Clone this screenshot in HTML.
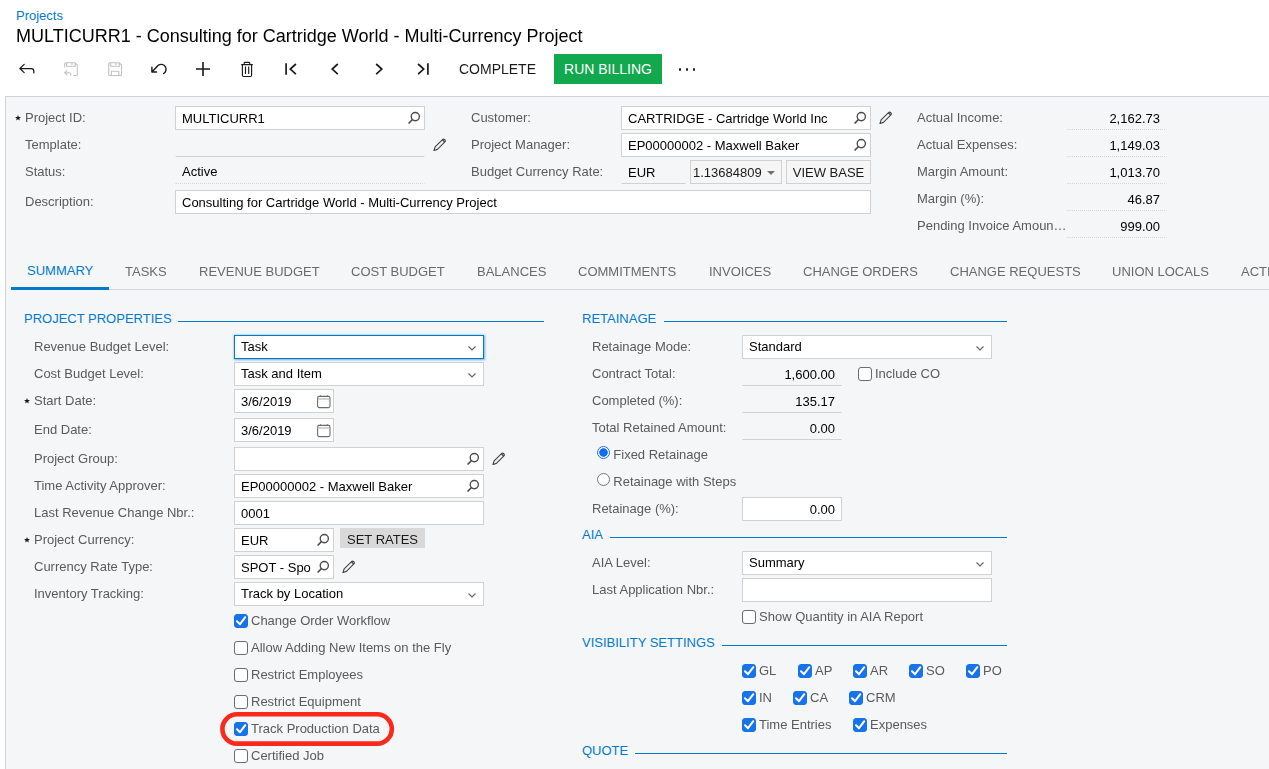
<!DOCTYPE html>
<html><head><meta charset="utf-8"><title>Projects</title>
<style>
html,body{margin:0;padding:0;background:#fff;}
body{width:1269px;height:769px;overflow:hidden;position:relative;font-family:"Liberation Sans",sans-serif;font-size:13px;}
#wrap{position:absolute;left:0;top:0;width:1269px;height:769px;overflow:hidden;}
.lbl,.box:not(.focus),.btn2,.g,.req{filter:grayscale(1)}
.abs,.lbl,.box,.req,.cb,.rb,.sec,.btn2{position:absolute;box-sizing:border-box;white-space:nowrap;}
.lbl{font-size:13px;line-height:24px;}
.req{font-size:12px;line-height:29px;color:#222;font-weight:bold}
.box{background:#fff;border:1px solid #cfd1d4;font-size:13px;line-height:24px;color:#000;padding:0 6px;overflow:hidden}
.box.ro{background:transparent;border-color:transparent;border-bottom:1px solid #cfd1d4}
.box.dot{background:transparent;border-color:transparent;border-bottom:1px dotted #d3d5d8}
.box.focus{border:1px solid #027acc;box-shadow:0 0 2px 0.5px rgba(2,122,204,.55);overflow:visible}
.box.dd{line-height:22px}
.ic{position:absolute}
.sec{font-size:13px;line-height:24px;color:#027acc}
.tab{font-size:13px;line-height:20px}
.cb{width:14px;height:14px;border:1px solid #6b6b6b;border-radius:3px;background:#fff}
.cb.on{background:#1773ea;border-color:#1773ea}
.cb svg{position:absolute;left:-1px;top:-1px}
.rb{width:13px;height:13px;border:1px solid #767676;border-radius:50%;background:#fff}
.rb.on{border:1px solid #1773ea;background:radial-gradient(circle,#0f6cf5 0,#0f6cf5 3.9px,#fff 4.6px)}
.btn2{border:1px solid #cfd1d4;background:#f5f6f8;font-size:13px;line-height:23px;color:#1a1a1a;text-align:center}
.caret{display:inline-block;width:0;height:0;border-left:4px solid transparent;border-right:4px solid transparent;border-top:4px solid #707070;margin-left:5px;vertical-align:2px}
</style></head>
<body>
<div class="abs" style="left:16px;top:8px;font-size:13px;line-height:16px;color:#027acc">Projects</div>
<div class="abs g" id="title" style="left:16px;top:24px;font-size:18px;line-height:24px;color:#000;white-space:nowrap">MULTICURR1 - Consulting for Cartridge World - Multi-Currency Project</div>
<svg class="abs" style="left:18px;top:62px" width="18" height="14" viewBox="0 0 18 14"><path d="M6.2 2.4 L1.9 6.5 L6.2 10.6 M1.9 6.5 H13.2 Q15.8 6.5 15.8 9.1 V10.9" stroke="#1a1a1a" stroke-width="1.25" fill="none" stroke-linecap="round" stroke-linejoin="round"/></svg>
<svg class="abs" style="left:63px;top:61px" width="17" height="16" viewBox="0 0 17 16"><path d="M1.7 6.6 V2.7 Q1.7 1.7 2.7 1.7 H12 L14.3 4 V13.5 Q14.3 14.5 13.3 14.5 H10.3 M3.6 1.7 V5.3 H12.2 V1.7 M9 2.3 V4" stroke="#c2c2c2" stroke-width="1.1" fill="none"/><path d="M4.3 9.3 L1.6 11.7 L4.3 14.1 M1.6 11.7 H6 Q7.8 11.7 7.8 13.3 V14.6" stroke="#c2c2c2" stroke-width="1.1" fill="none"/></svg>
<svg class="abs" style="left:107px;top:61px" width="16" height="16" viewBox="0 0 16 16"><path d="M1.7 2.7 Q1.7 1.7 2.7 1.7 H12.2 L14.5 4 V13.5 Q14.5 14.5 13.5 14.5 H2.7 Q1.7 14.5 1.7 13.5 Z M3.6 1.7 V5.3 H12.2 V1.7 M9 2.3 V4 M4.4 14.5 V10.3 H11.8 V14.5" stroke="#c2c2c2" stroke-width="1.1" fill="none"/></svg>
<svg class="abs" style="left:150px;top:61px" width="18" height="16" viewBox="0 0 18 16"><path d="M1.9 6.2 V11 H6.6 M1.9 11 L8 4.5 A4.9 4.9 0 1 1 13.6 12.5" stroke="#1a1a1a" stroke-width="1.4" fill="none" stroke-linejoin="round" stroke-linecap="round"/></svg>
<svg class="abs" style="left:195px;top:61px" width="16" height="16" viewBox="0 0 16 16"><path d="M8 1 V15 M1 8 H15" stroke="#1a1a1a" stroke-width="1.6" fill="none"/></svg>
<svg class="abs" style="left:240px;top:60px" width="14" height="18" viewBox="0 0 14 18"><path d="M1.2 4.6 H12.8 M4.2 4.4 V3.2 Q4.2 2.3 5.1 2.3 H8.9 Q9.8 2.3 9.8 3.2 V4.4 M2.4 4.6 V15.3 Q2.4 16.5 3.6 16.5 H10.4 Q11.6 16.5 11.6 15.3 V4.6 M5.5 6.6 V14 M8.7 6.6 V14" stroke="#1a1a1a" stroke-width="1.15" fill="none"/></svg>
<svg class="abs" style="left:283px;top:61px" width="16" height="16" viewBox="0 0 16 16"><path d="M3.1 2.2 V13.8 M12.9 3 L7.3 8.1 L12.9 13.2" stroke="#1a1a1a" stroke-width="1.7" fill="none"/></svg>
<svg class="abs" style="left:329px;top:61px" width="12" height="16" viewBox="0 0 12 16"><path d="M8.8 3 L3.2 8.1 L8.8 13.2" stroke="#1a1a1a" stroke-width="1.7" fill="none"/></svg>
<svg class="abs" style="left:373px;top:61px" width="12" height="16" viewBox="0 0 12 16"><path d="M3.2 3 L8.8 8.1 L3.2 13.2" stroke="#1a1a1a" stroke-width="1.7" fill="none"/></svg>
<svg class="abs" style="left:415px;top:61px" width="16" height="16" viewBox="0 0 16 16"><path d="M12.9 2.2 V13.8 M3.1 3 L8.7 8.1 L3.1 13.2" stroke="#1a1a1a" stroke-width="1.7" fill="none"/></svg>
<div class="abs g" style="left:459px;top:59px;font-size:14px;line-height:20px;color:#1a1a1a">COMPLETE</div>
<div class="abs" style="left:554px;top:54px;width:108px;height:30px;background:#12a84d;color:#fff;font-size:14px;line-height:30px;text-align:center">RUN BILLING</div>
<div class="abs" style="left:679px;top:68.2px;width:2.4px;height:2.4px;border-radius:2px;background:#222;box-shadow:7px 0 0 #222,14px 0 0 #222"></div>
<div class="abs" style="left:5px;top:96px;width:1270px;height:700px;background:#f5f6f8;border:1px solid #d2d4d8;box-sizing:border-box"></div>
<div class="lbl" style="left:25px;top:106px;color:#5a5a5a">Project ID:</div>
<svg class="abs" style="left:13.9px;top:113.9px" width="8" height="8" viewBox="0 0 8 8"><polygon points="4.00,0.90 4.79,2.91 6.95,3.04 5.28,4.42 5.82,6.51 4.00,5.35 2.18,6.51 2.72,4.42 1.05,3.04 3.21,2.91" fill="#1a1a1a"/></svg>
<div class="lbl" style="left:25px;top:133px;color:#5a5a5a">Template:</div>
<div class="lbl" style="left:25px;top:160px;color:#5a5a5a">Status:</div>
<div class="lbl" style="left:25px;top:190px;color:#5a5a5a">Description:</div>
<div class="box" style="left:175px;top:106px;width:250px;height:24px;">MULTICURR1<svg class="ic" style="right:3px;top:3.5px" width="14" height="14" viewBox="0 0 14 14"><circle cx="8.3" cy="5.6" r="4.1" fill="none" stroke="#4a4a4a" stroke-width="1.35"/><path d="M5.5 8.5 L1.6 12.5" stroke="#4a4a4a" stroke-width="1.7" fill="none"/></svg></div>
<div class="box ro" style="left:175px;top:133px;width:250px;height:24px;"></div>
<svg class="abs" style="left:432.5px;top:137.5px" width="13.5" height="13.5" viewBox="0 0 14 14"><path d="M1 13 L2.2 9.3 L9.9 1.6 Q11 0.7 12.2 1.8 Q13.3 3 12.3 4.1 L4.6 11.8 Z" fill="none" stroke="#444" stroke-width="1.15" stroke-linejoin="round"/><path d="M9.7 1.8 L12.1 4.2" stroke="#444" stroke-width="1.3"/></svg>
<div class="box dot" style="left:175px;top:160px;width:250px;height:24px;"><span style="position:relative;top:-1.5px">Active</span></div>
<div class="box" style="left:175px;top:190px;width:696px;height:24px;">Consulting for Cartridge World - Multi-Currency Project</div>
<div class="lbl" style="left:471px;top:106px;color:#5a5a5a">Customer:</div>
<div class="lbl" style="left:471px;top:133px;color:#5a5a5a">Project Manager:</div>
<div class="lbl" style="left:471px;top:160px;color:#5a5a5a">Budget Currency Rate:</div>
<div class="box" style="left:621px;top:106px;width:250px;height:24px;">CARTRIDGE - Cartridge World Inc<svg class="ic" style="right:3px;top:3.5px" width="14" height="14" viewBox="0 0 14 14"><circle cx="8.3" cy="5.6" r="4.1" fill="none" stroke="#4a4a4a" stroke-width="1.35"/><path d="M5.5 8.5 L1.6 12.5" stroke="#4a4a4a" stroke-width="1.7" fill="none"/></svg></div>
<svg class="abs" style="left:878.5px;top:110.5px" width="13.5" height="13.5" viewBox="0 0 14 14"><path d="M1 13 L2.2 9.3 L9.9 1.6 Q11 0.7 12.2 1.8 Q13.3 3 12.3 4.1 L4.6 11.8 Z" fill="none" stroke="#444" stroke-width="1.15" stroke-linejoin="round"/><path d="M9.7 1.8 L12.1 4.2" stroke="#444" stroke-width="1.3"/></svg>
<div class="box" style="left:621px;top:133px;width:250px;height:24px;">EP00000002 - Maxwell Baker<svg class="ic" style="right:3px;top:3.5px" width="14" height="14" viewBox="0 0 14 14"><circle cx="8.3" cy="5.6" r="4.1" fill="none" stroke="#4a4a4a" stroke-width="1.35"/><path d="M5.5 8.5 L1.6 12.5" stroke="#4a4a4a" stroke-width="1.7" fill="none"/></svg></div>
<div class="box ro" style="left:621px;top:160px;width:65px;height:24px;">EUR</div>
<div class="btn2" style="left:690px;top:160px;width:92px;height:24px;text-align:left;padding-left:2px">1.13684809<span class="caret"></span></div>
<div class="btn2" style="left:786px;top:160px;width:85px;height:24px">VIEW BASE</div>
<div class="lbl" style="left:917px;top:106px;color:#5a5a5a">Actual Income:</div>
<div class="box dot" style="left:1067px;top:106px;width:100px;height:24px;text-align:right;padding-right:6px;">2,162.73</div>
<div class="lbl" style="left:917px;top:133px;color:#5a5a5a">Actual Expenses:</div>
<div class="box dot" style="left:1067px;top:133px;width:100px;height:24px;text-align:right;padding-right:6px;">1,149.03</div>
<div class="lbl" style="left:917px;top:160px;color:#5a5a5a">Margin Amount:</div>
<div class="box dot" style="left:1067px;top:160px;width:100px;height:24px;text-align:right;padding-right:6px;">1,013.70</div>
<div class="lbl" style="left:917px;top:187px;color:#5a5a5a">Margin (%):</div>
<div class="box dot" style="left:1067px;top:187px;width:100px;height:24px;text-align:right;padding-right:6px;">46.87</div>
<div class="lbl" style="left:917px;top:214px;color:#5a5a5a">Pending Invoice Amoun…</div>
<div class="box dot" style="left:1067px;top:214px;width:100px;height:24px;text-align:right;padding-right:6px;">999.00</div>
<div class="abs tab" style="left:27px;top:261px;color:#027acc">SUMMARY</div>
<div class="abs tab g" style="left:125px;top:262px;color:#6a6a6a">TASKS</div>
<div class="abs tab g" style="left:199px;top:262px;color:#6a6a6a">REVENUE BUDGET</div>
<div class="abs tab g" style="left:351px;top:262px;color:#6a6a6a">COST BUDGET</div>
<div class="abs tab g" style="left:477px;top:262px;color:#6a6a6a">BALANCES</div>
<div class="abs tab g" style="left:578px;top:262px;color:#6a6a6a">COMMITMENTS</div>
<div class="abs tab g" style="left:709px;top:262px;color:#6a6a6a">INVOICES</div>
<div class="abs tab g" style="left:803px;top:262px;color:#6a6a6a">CHANGE ORDERS</div>
<div class="abs tab g" style="left:950px;top:262px;color:#6a6a6a">CHANGE REQUESTS</div>
<div class="abs tab g" style="left:1112px;top:262px;color:#6a6a6a">UNION LOCALS</div>
<div class="abs tab g" style="left:1241px;top:262px;color:#6a6a6a">ACTIVITIES</div>
<div class="abs" style="left:11px;top:289px;width:1260px;height:1px;background:#d4d6d9"></div>
<div class="abs" style="left:11px;top:287px;width:98px;height:3px;background:#027acc"></div>
<div class="sec" style="left:24px;top:307px">PROJECT PROPERTIES</div>
<div class="abs" style="left:178px;top:321px;width:366px;height:1px;background:#027acc"></div>
<div class="lbl" style="left:34px;top:335px;color:#5a5a5a">Revenue Budget Level:</div>
<div class="box focus dd" style="left:234px;top:335px;width:250px;height:24px;"><span class="g" style="display:inline-block">Task</span><svg class="ic" style="right:6.5px;top:9px" width="10" height="7" viewBox="0 0 10 7"><path d="M1.5 1.5 L5 5 L8.5 1.5" stroke="#666" stroke-width="1.2" fill="none"/></svg></div>
<div class="lbl" style="left:34px;top:362px;color:#5a5a5a">Cost Budget Level:</div>
<div class="box dd" style="left:234px;top:362px;width:250px;height:24px;">Task and Item<svg class="ic" style="right:6.5px;top:9px" width="10" height="7" viewBox="0 0 10 7"><path d="M1.5 1.5 L5 5 L8.5 1.5" stroke="#666" stroke-width="1.2" fill="none"/></svg></div>
<div class="lbl" style="left:34px;top:389px;color:#5a5a5a">Start Date:</div>
<svg class="abs" style="left:22.9px;top:396.9px" width="8" height="8" viewBox="0 0 8 8"><polygon points="4.00,0.90 4.79,2.91 6.95,3.04 5.28,4.42 5.82,6.51 4.00,5.35 2.18,6.51 2.72,4.42 1.05,3.04 3.21,2.91" fill="#1a1a1a"/></svg>
<div class="box" style="left:234px;top:389px;width:100px;height:24px;">3/6/2019<svg class="ic" style="right:1.6px;top:4.8px" width="14" height="14" viewBox="0 0 14 14"><rect x="0.6" y="1.4" width="12.4" height="11.2" rx="1.6" fill="none" stroke="#6e6e6e" stroke-width="1.1"/><path d="M3.4 0.2 V1.4 M10.2 0.2 V1.4" stroke="#6e6e6e" stroke-width="1.1" fill="none"/><path d="M0.6 4 H13" stroke="#a8a8a8" stroke-width="1" fill="none"/></svg></div>
<div class="lbl" style="left:34px;top:418px;color:#5a5a5a">End Date:</div>
<div class="box" style="left:234px;top:418px;width:100px;height:24px;">3/6/2019<svg class="ic" style="right:1.6px;top:4.8px" width="14" height="14" viewBox="0 0 14 14"><rect x="0.6" y="1.4" width="12.4" height="11.2" rx="1.6" fill="none" stroke="#6e6e6e" stroke-width="1.1"/><path d="M3.4 0.2 V1.4 M10.2 0.2 V1.4" stroke="#6e6e6e" stroke-width="1.1" fill="none"/><path d="M0.6 4 H13" stroke="#a8a8a8" stroke-width="1" fill="none"/></svg></div>
<div class="lbl" style="left:34px;top:447px;color:#5a5a5a">Project Group:</div>
<div class="box" style="left:234px;top:447px;width:250px;height:24px;"><svg class="ic" style="right:3px;top:3.5px" width="14" height="14" viewBox="0 0 14 14"><circle cx="8.3" cy="5.6" r="4.1" fill="none" stroke="#4a4a4a" stroke-width="1.35"/><path d="M5.5 8.5 L1.6 12.5" stroke="#4a4a4a" stroke-width="1.7" fill="none"/></svg></div>
<svg class="abs" style="left:491.5px;top:451.5px" width="13.5" height="13.5" viewBox="0 0 14 14"><path d="M1 13 L2.2 9.3 L9.9 1.6 Q11 0.7 12.2 1.8 Q13.3 3 12.3 4.1 L4.6 11.8 Z" fill="none" stroke="#444" stroke-width="1.15" stroke-linejoin="round"/><path d="M9.7 1.8 L12.1 4.2" stroke="#444" stroke-width="1.3"/></svg>
<div class="lbl" style="left:34px;top:474px;color:#5a5a5a">Time Activity Approver:</div>
<div class="box" style="left:234px;top:474px;width:250px;height:24px;">EP00000002 - Maxwell Baker<svg class="ic" style="right:3px;top:3.5px" width="14" height="14" viewBox="0 0 14 14"><circle cx="8.3" cy="5.6" r="4.1" fill="none" stroke="#4a4a4a" stroke-width="1.35"/><path d="M5.5 8.5 L1.6 12.5" stroke="#4a4a4a" stroke-width="1.7" fill="none"/></svg></div>
<div class="lbl" style="left:34px;top:501px;color:#5a5a5a">Last Revenue Change Nbr.:</div>
<div class="box" style="left:234px;top:501px;width:250px;height:24px;">0001</div>
<div class="lbl" style="left:34px;top:528px;color:#5a5a5a">Project Currency:</div>
<svg class="abs" style="left:22.9px;top:535.9px" width="8" height="8" viewBox="0 0 8 8"><polygon points="4.00,0.90 4.79,2.91 6.95,3.04 5.28,4.42 5.82,6.51 4.00,5.35 2.18,6.51 2.72,4.42 1.05,3.04 3.21,2.91" fill="#1a1a1a"/></svg>
<div class="box" style="left:234px;top:528px;width:100px;height:24px;">EUR<svg class="ic" style="right:3px;top:3.5px" width="14" height="14" viewBox="0 0 14 14"><circle cx="8.3" cy="5.6" r="4.1" fill="none" stroke="#4a4a4a" stroke-width="1.35"/><path d="M5.5 8.5 L1.6 12.5" stroke="#4a4a4a" stroke-width="1.7" fill="none"/></svg></div>
<div class="abs g" style="left:340px;top:528px;width:85px;height:20px;background:#d8d9db;color:#1a1a1a;font-size:13px;line-height:23px;text-align:center">SET RATES</div>
<div class="lbl" style="left:34px;top:555px;color:#5a5a5a">Currency Rate Type:</div>
<div class="box" style="left:234px;top:555px;width:100px;height:24px;">SPOT - Spo<svg class="ic" style="right:3px;top:3.5px" width="14" height="14" viewBox="0 0 14 14"><circle cx="8.3" cy="5.6" r="4.1" fill="none" stroke="#4a4a4a" stroke-width="1.35"/><path d="M5.5 8.5 L1.6 12.5" stroke="#4a4a4a" stroke-width="1.7" fill="none"/></svg></div>
<svg class="abs" style="left:341.5px;top:559.5px" width="13.5" height="13.5" viewBox="0 0 14 14"><path d="M1 13 L2.2 9.3 L9.9 1.6 Q11 0.7 12.2 1.8 Q13.3 3 12.3 4.1 L4.6 11.8 Z" fill="none" stroke="#444" stroke-width="1.15" stroke-linejoin="round"/><path d="M9.7 1.8 L12.1 4.2" stroke="#444" stroke-width="1.3"/></svg>
<div class="lbl" style="left:34px;top:582px;color:#5a5a5a">Inventory Tracking:</div>
<div class="box dd" style="left:234px;top:582px;width:250px;height:24px;">Track by Location<svg class="ic" style="right:6.5px;top:9px" width="10" height="7" viewBox="0 0 10 7"><path d="M1.5 1.5 L5 5 L8.5 1.5" stroke="#666" stroke-width="1.2" fill="none"/></svg></div>
<div class="cb on" style="left:234px;top:614px"><svg width="14" height="14" viewBox="0 0 14 14"><path d="M3 7.2 L6 10.2 L11.3 3.2" stroke="#fff" stroke-width="2" fill="none" stroke-linecap="round" stroke-linejoin="round"/></svg></div>
<div class="lbl" style="left:251px;top:609px;color:#5a5a5a">Change Order Workflow</div>
<div class="cb" style="left:234px;top:641px"></div>
<div class="lbl" style="left:251px;top:636px;color:#5a5a5a">Allow Adding New Items on the Fly</div>
<div class="cb" style="left:234px;top:668px"></div>
<div class="lbl" style="left:251px;top:663px;color:#5a5a5a">Restrict Employees</div>
<div class="cb" style="left:234px;top:695px"></div>
<div class="lbl" style="left:251px;top:690px;color:#5a5a5a">Restrict Equipment</div>
<div class="cb on" style="left:234px;top:722px"><svg width="14" height="14" viewBox="0 0 14 14"><path d="M3 7.2 L6 10.2 L11.3 3.2" stroke="#fff" stroke-width="2" fill="none" stroke-linecap="round" stroke-linejoin="round"/></svg></div>
<div class="lbl" style="left:251px;top:717px;color:#5a5a5a">Track Production Data</div>
<div class="cb" style="left:234px;top:749px"></div>
<div class="lbl" style="left:251px;top:744px;color:#5a5a5a">Certified Job</div>
<svg class="abs" style="left:218px;top:710px" width="178" height="38" viewBox="0 0 178 38"><rect x="4.4" y="4.2" width="169.4" height="29.4" rx="14.7" fill="none" stroke="#fb281c" stroke-width="4.6"/></svg>
<div class="sec" style="left:582px;top:307px">RETAINAGE</div>
<div class="abs" style="left:664px;top:321px;width:343px;height:1px;background:#027acc"></div>
<div class="lbl" style="left:592px;top:335px;color:#5a5a5a">Retainage Mode:</div>
<div class="box dd" style="left:742px;top:335px;width:250px;height:24px;">Standard<svg class="ic" style="right:6.5px;top:9px" width="10" height="7" viewBox="0 0 10 7"><path d="M1.5 1.5 L5 5 L8.5 1.5" stroke="#666" stroke-width="1.2" fill="none"/></svg></div>
<div class="lbl" style="left:592px;top:362px;color:#5a5a5a">Contract Total:</div>
<div class="box ro" style="left:742px;top:362px;width:100px;height:24px;text-align:right;padding-right:6px;">1,600.00</div>
<div class="cb" style="left:858px;top:367px"></div>
<div class="lbl" style="left:875px;top:362px;color:#5a5a5a">Include CO</div>
<div class="lbl" style="left:592px;top:389px;color:#5a5a5a">Completed (%):</div>
<div class="box ro" style="left:742px;top:389px;width:100px;height:24px;text-align:right;padding-right:6px;">135.17</div>
<div class="lbl" style="left:592px;top:416px;color:#5a5a5a">Total Retained Amount:</div>
<div class="box ro" style="left:742px;top:416px;width:100px;height:24px;text-align:right;padding-right:6px;">0.00</div>
<div class="rb on" style="left:597px;top:446px"></div>
<div class="lbl" style="left:613.3px;top:443px;color:#5a5a5a">Fixed Retainage</div>
<div class="rb" style="left:597px;top:473px"></div>
<div class="lbl" style="left:613.3px;top:470px;color:#5a5a5a">Retainage with Steps</div>
<div class="lbl" style="left:592px;top:497px;color:#5a5a5a">Retainage (%):</div>
<div class="box" style="left:742px;top:497px;width:100px;height:24px;text-align:right;padding-right:6px;">0.00</div>
<div class="sec" style="left:582px;top:523px">AIA</div>
<div class="abs" style="left:610px;top:537px;width:397px;height:1px;background:#027acc"></div>
<div class="lbl" style="left:592px;top:551px;color:#5a5a5a">AIA Level:</div>
<div class="box dd" style="left:742px;top:551px;width:250px;height:24px;">Summary<svg class="ic" style="right:6.5px;top:9px" width="10" height="7" viewBox="0 0 10 7"><path d="M1.5 1.5 L5 5 L8.5 1.5" stroke="#666" stroke-width="1.2" fill="none"/></svg></div>
<div class="lbl" style="left:592px;top:578px;color:#5a5a5a">Last Application Nbr.:</div>
<div class="box" style="left:742px;top:578px;width:250px;height:24px;"></div>
<div class="cb" style="left:742px;top:610px"></div>
<div class="lbl" style="left:759px;top:605px;color:#5a5a5a">Show Quantity in AIA Report</div>
<div class="sec" style="left:582px;top:631px">VISIBILITY SETTINGS</div>
<div class="abs" style="left:722px;top:645px;width:285px;height:1px;background:#027acc"></div>
<div class="cb on" style="left:742px;top:664px"><svg width="14" height="14" viewBox="0 0 14 14"><path d="M3 7.2 L6 10.2 L11.3 3.2" stroke="#fff" stroke-width="2" fill="none" stroke-linecap="round" stroke-linejoin="round"/></svg></div>
<div class="lbl" style="left:759px;top:659px;color:#5a5a5a">GL</div>
<div class="cb on" style="left:798px;top:664px"><svg width="14" height="14" viewBox="0 0 14 14"><path d="M3 7.2 L6 10.2 L11.3 3.2" stroke="#fff" stroke-width="2" fill="none" stroke-linecap="round" stroke-linejoin="round"/></svg></div>
<div class="lbl" style="left:815px;top:659px;color:#5a5a5a">AP</div>
<div class="cb on" style="left:853px;top:664px"><svg width="14" height="14" viewBox="0 0 14 14"><path d="M3 7.2 L6 10.2 L11.3 3.2" stroke="#fff" stroke-width="2" fill="none" stroke-linecap="round" stroke-linejoin="round"/></svg></div>
<div class="lbl" style="left:870px;top:659px;color:#5a5a5a">AR</div>
<div class="cb on" style="left:909px;top:664px"><svg width="14" height="14" viewBox="0 0 14 14"><path d="M3 7.2 L6 10.2 L11.3 3.2" stroke="#fff" stroke-width="2" fill="none" stroke-linecap="round" stroke-linejoin="round"/></svg></div>
<div class="lbl" style="left:926px;top:659px;color:#5a5a5a">SO</div>
<div class="cb on" style="left:966px;top:664px"><svg width="14" height="14" viewBox="0 0 14 14"><path d="M3 7.2 L6 10.2 L11.3 3.2" stroke="#fff" stroke-width="2" fill="none" stroke-linecap="round" stroke-linejoin="round"/></svg></div>
<div class="lbl" style="left:983px;top:659px;color:#5a5a5a">PO</div>
<div class="cb on" style="left:742px;top:691px"><svg width="14" height="14" viewBox="0 0 14 14"><path d="M3 7.2 L6 10.2 L11.3 3.2" stroke="#fff" stroke-width="2" fill="none" stroke-linecap="round" stroke-linejoin="round"/></svg></div>
<div class="lbl" style="left:759px;top:686px;color:#5a5a5a">IN</div>
<div class="cb on" style="left:793px;top:691px"><svg width="14" height="14" viewBox="0 0 14 14"><path d="M3 7.2 L6 10.2 L11.3 3.2" stroke="#fff" stroke-width="2" fill="none" stroke-linecap="round" stroke-linejoin="round"/></svg></div>
<div class="lbl" style="left:810px;top:686px;color:#5a5a5a">CA</div>
<div class="cb on" style="left:849px;top:691px"><svg width="14" height="14" viewBox="0 0 14 14"><path d="M3 7.2 L6 10.2 L11.3 3.2" stroke="#fff" stroke-width="2" fill="none" stroke-linecap="round" stroke-linejoin="round"/></svg></div>
<div class="lbl" style="left:866px;top:686px;color:#5a5a5a">CRM</div>
<div class="cb on" style="left:742px;top:718px"><svg width="14" height="14" viewBox="0 0 14 14"><path d="M3 7.2 L6 10.2 L11.3 3.2" stroke="#fff" stroke-width="2" fill="none" stroke-linecap="round" stroke-linejoin="round"/></svg></div>
<div class="lbl" style="left:759px;top:713px;color:#5a5a5a">Time Entries</div>
<div class="cb on" style="left:853px;top:718px"><svg width="14" height="14" viewBox="0 0 14 14"><path d="M3 7.2 L6 10.2 L11.3 3.2" stroke="#fff" stroke-width="2" fill="none" stroke-linecap="round" stroke-linejoin="round"/></svg></div>
<div class="lbl" style="left:870px;top:713px;color:#5a5a5a">Expenses</div>
<div class="sec" style="left:582px;top:739px">QUOTE</div>
<div class="abs" style="left:635px;top:753px;width:372px;height:1px;background:#027acc"></div>
</body></html>
